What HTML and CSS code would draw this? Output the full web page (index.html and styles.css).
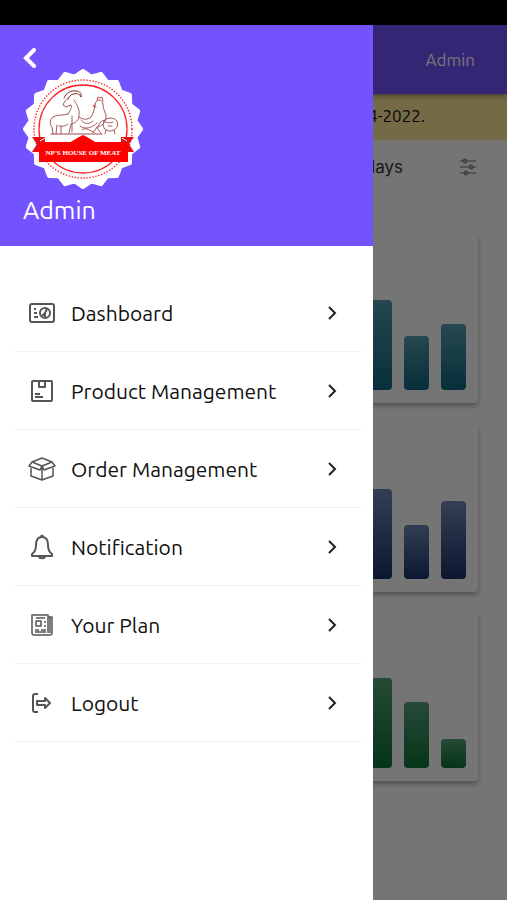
FILE: index.html
```html
<!DOCTYPE html>
<html lang="en">
  <head>
    <meta charset="UTF-8" />
    <meta name="viewport" content="width=device-width, initial-scale=1.0" />
    <title>Admin</title>
    <link rel="stylesheet" href="styles.css">
  </head>
  <body>
    <div class="status-bar"></div>
    <div class="screen">
      <main class="page">
        <header class="topbar">Admin</header>
        <div class="notice">4-2022.</div>
        <div class="filter-row">
          <span>days</span>
          <button type="button" class="filter-btn" aria-label="Filter">
            <svg width="18" height="18" viewBox="0 0 18 18">
              <path d="M1 3h16M1 9h16M1 15h16" />
              <circle cx="6" cy="3" r="2" />
              <circle cx="12" cy="9" r="2" />
              <circle cx="7" cy="15" r="2" />
            </svg>
          </button>
        </div>
        <div class="cards">
          <section class="card teal">
            <div class="bar" style="height: 90px"></div>
            <div class="bar" style="height: 54px"></div>
            <div class="bar" style="height: 66px"></div>
          </section>
          <section class="card blue">
            <div class="bar" style="height: 90px"></div>
            <div class="bar" style="height: 54px"></div>
            <div class="bar" style="height: 78px"></div>
          </section>
          <section class="card green">
            <div class="bar" style="height: 90px"></div>
            <div class="bar" style="height: 66px"></div>
            <div class="bar" style="height: 29px"></div>
          </section>
        </div>
      </main>

      <div class="overlay"></div>

      <aside class="drawer">
        <div class="drawer-head">
          <button type="button" class="back-btn" aria-label="Back">
            <svg width="14" height="20" viewBox="0 0 14 20">
              <path d="M11 2L3 10l8 8" />
            </svg>
          </button>
          <svg class="logo" width="120" height="120" viewBox="0 0 120 120">
            <path d="M60 2L68.300 7.700 77.900 4.800 84.100 12.800 94.100 13.100 97.500 22.500 106.900 25.900 107.200 35.900 115.200 42.100 112.300 51.700 118 60 112.300 68.300 115.200 77.900 107.200 84.100 106.900 94.100 97.500 97.500 94.100 106.900 84.100 107.200 77.900 115.200 68.300 112.300 60 118 51.700 112.300 42.100 115.200 35.900 107.200 25.900 106.900 22.500 97.500 13.100 94.100 12.800 84.100 4.800 77.900 7.700 68.300 2 60 7.700 51.700 4.800 42.100 12.800 35.900 13.100 25.900 22.500 22.500 25.900 13.100 35.900 12.800 42.100 4.800 51.700 7.700z" fill="#fff" stroke="#fff" stroke-width="4" stroke-linejoin="round" />
            <circle cx="60" cy="60" r="49" fill="none" stroke="#f22" stroke-width="1.4" stroke-dasharray="1.4 1.6" />
            <circle cx="60" cy="60" r="44" fill="none" stroke="#f22" stroke-width="1.3" />
            <!-- goat, hen and pig -->
            <g fill="none" stroke="#9b4a4a" stroke-width="0.9" stroke-linecap="round" stroke-linejoin="round">
              <path d="M41 29c2-5 7-8 12-7 4 0 6 3 5 6-1-3-4-4-7-3-3 0-5 3-6 5" stroke="#7a2a2a" stroke-width="1" />
              <path d="M45 29c-2 2-4 4-5 7l3 2 5-2c1 3-1 6-3 9" />
              <path d="M51 31c3 5 6 9 5 15 0 5-3 8-8 9l-2 9M45 45c-5 2-11 0-15 3-4 3-3 8-1 10l1 7M34 56l-1 9M36 57c4 1 6 0 9-2M38 57v8M49 47v16" />
              <path d="M56 48c5 3 8 3 12 0 3-4 3-8 4-12 0-3 2-5 5-5 2 1 3 2 3 5 0 5 4 9 3 14-1 4-4 7-9 8l-4 6" />
              <path d="M74 31l1-3 2 1 2-1 1 4M72 36l-2 1 3 1" stroke="#c33" />
              <path d="M58 51c4 5 9 4 12 1M57 57c5 4 12 2 17-3M59 61c4-4 9 2 12 2" />
              <path d="M81 52c2-4 10-4 13 0 2 5-1 10-7 10s-8-5-6-10zM81 51c-4 1-5 5-7 8l4 5M83 61l-1 4M91 61l1 4M83 53l3 1 4-1M85 57h4" />
              <path d="M28 65h39M66 65h13" stroke-width="1.2" />
            </g>
            <path d="M9 68h13v15H9l5-8zM111 68H98v15h13l-5-8z" fill="#e60d14" />
            <path d="M46 74l10-6 4-2 4 2 10 6z" fill="#f00" />
            <path d="M16 73h89v20H16z" fill="#f00" />
            <path d="M17 72l5-3M104 72l-5-3" stroke="#fff" />
            <text x="60" y="86" text-anchor="middle" class="logo-text">NP'S HOUSE OF MEAT</text>
          </svg>
          <div class="user-name">Admin</div>
        </div>

        <nav class="menu">
          <a href="#">
            <svg class="icon" viewBox="0 0 28 28">
              <rect x="2" y="5" width="24" height="18" rx="2" />
              <circle cx="17" cy="14" r="5" />
              <path d="M17 14l2-4M17 14l-3 3M17 14v4" />
              <path d="M6 10h2M6 14h3M6 18h4" />
            </svg>
            <span>Dashboard</span>
            <svg class="chevron" viewBox="0 0 10 14"><path d="M2 1l6 6-6 6" /></svg>
          </a>
          <a href="#">
            <svg class="icon" viewBox="0 0 28 28">
              <rect x="4" y="4" width="20" height="20" rx="1" />
              <path d="M11 4v6h6V4M7 17h5M7 20h8" />
            </svg>
            <span>Product Management</span>
            <svg class="chevron" viewBox="0 0 10 14"><path d="M2 1l6 6-6 6" /></svg>
          </a>
          <a href="#">
            <svg class="icon thin" viewBox="0 0 28 28">
              <path d="M14 3L4 7l10 4 10-4zM4 7l-3 4 11 4 2-4 2 4 11-4-3-4M3 13v8l11 4 11-4v-8M14 11v14" />
            </svg>
            <span>Order Management</span>
            <svg class="chevron" viewBox="0 0 10 14"><path d="M2 1l6 6-6 6" /></svg>
          </a>
          <a href="#">
            <svg class="icon" viewBox="0 0 28 28">
              <path d="M14 4c-5 0-6 4-6 8 0 5-1 7-4 9v2h20v-2c-3-2-4-4-4-9 0-4-1-8-6-8zM13 4c0-2 2-2 2 0M11 23c0 3 6 3 6 0" />
            </svg>
            <span>Notification</span>
            <svg class="chevron" viewBox="0 0 10 14"><path d="M2 1l6 6-6 6" /></svg>
          </a>
          <a href="#">
            <svg class="icon thin" viewBox="0 0 28 28">
              <path d="M20 22V4H4v18c0 1 1 2 2 2h16c1 0 2-1 2-2V6h-4M22 6v16" />
              <path d="M8 7h9M16 11h2M16 15h2M7 19h4M13 19h5M7 21h11" />
              <rect x="8" y="10" width="5" height="5" />
            </svg>
            <span>Your Plan</span>
            <svg class="chevron" viewBox="0 0 10 14"><path d="M2 1l6 6-6 6" /></svg>
          </a>
          <a href="#">
            <svg class="icon" viewBox="0 0 28 28">
              <path d="M10 5H7c-1 0-2 1-2 2v14c0 1 1 2 2 2h3" />
              <path d="M9 12h8V9l5 5-5 5v-3H9z" />
            </svg>
            <span>Logout</span>
            <svg class="chevron" viewBox="0 0 10 14"><path d="M2 1l6 6-6 6" /></svg>
          </a>
        </nav>
      </aside>
    </div>
  </body>
</html>
```
FILE: styles.css
```css
* {
  margin: 0;
  padding: 0;
  box-sizing: border-box;
}

body {
  font-family: Ubuntu, "Noto Sans", sans-serif;
  color: #111;
  min-height: 100vh;
  display: flex;
  flex-direction: column;
}

button {
  background: none;
  border: none;
  cursor: pointer;
}

.status-bar {
  height: 25px;
  background-color: #000;
}

.screen {
  position: relative;
  flex: 1;
  overflow: hidden;
}

/* Page behind the drawer */
.topbar {
  position: relative;
  height: 69px;
  padding: 0 32px;
  display: flex;
  align-items: center;
  justify-content: flex-end;
  background-color: #7352ff;
  color: #fff;
  font-size: 17px;
  box-shadow: 0 2px 5px rgba(0, 0, 0, 0.4);
}

.notice {
  height: 46px;
  padding: 0 82px 4px 0;
  display: flex;
  align-items: center;
  justify-content: flex-end;
  background-color: #fce696;
  font-size: 17px;
}

.filter-row {
  height: 54px;
  padding: 0 30px;
  display: flex;
  align-items: center;
  justify-content: flex-end;
  gap: 56px;
  font-family: Inter, sans-serif;
  font-size: 17px;
  color: #333;
}

.filter-btn svg {
  display: block;
  fill: #aab;
  stroke: #778;
  stroke-width: 1;
}

.cards {
  padding: 40px 29px 20px;
  display: grid;
  gap: 20px;
}

.card {
  height: 169px;
  padding: 12px 12px 13px;
  display: flex;
  align-items: flex-end;
  justify-content: flex-end;
  gap: 12px;
  background-color: #fff;
  border-radius: 4px;
  box-shadow: 0 3px 5px rgba(0, 0, 0, 0.3);
}

.bar {
  width: 25px;
  border-radius: 4px;
}

.teal .bar {
  background: linear-gradient(#549dad, #10677f);
}

.blue .bar {
  background: linear-gradient(#7089b8, #173468);
}

.green .bar {
  background: linear-gradient(#54a278, #0d7339);
}

.overlay {
  position: absolute;
  inset: 0;
  background-color: rgba(0, 0, 0, 0.54);
}

/* Drawer */
.drawer {
  position: absolute;
  top: 0;
  bottom: 0;
  left: 0;
  width: calc(100% - 134px);
  background-color: #fff;
}

.drawer-head {
  padding: 22px 23px 20px;
  background-color: #7352ff;
  color: #fff;
}

.back-btn {
  display: block;
  height: 22px;
}

.back-btn svg {
  display: block;
  fill: none;
  stroke: #fff;
  stroke-width: 4;
  stroke-linecap: round;
}

.logo {
  display: block;
}

.logo-text {
  font-family: "Liberation Serif", serif;
  font-size: 7px;
  font-weight: bold;
  fill: #fff;
}

.user-name {
  margin-top: 6px;
  font-size: 25px;
  line-height: 31px;
}

.menu {
  margin: 28px 12px 0 14px;
}

.menu a {
  height: 78px;
  padding: 0 24px 0 14px;
  display: flex;
  align-items: center;
  border-bottom: 1px solid #f0f0f0;
  color: #111;
  font-size: 21px;
  text-decoration: none;
}

.menu span {
  flex: 1;
  margin-left: 15px;
}

.icon {
  width: 28px;
  height: 28px;
  fill: none;
  stroke: #555;
  stroke-width: 2;
  stroke-linejoin: round;
}

.icon.thin {
  stroke-width: 1.5;
}

.chevron {
  width: 10px;
  height: 14px;
  fill: none;
  stroke: #222;
  stroke-width: 2;
}
```
